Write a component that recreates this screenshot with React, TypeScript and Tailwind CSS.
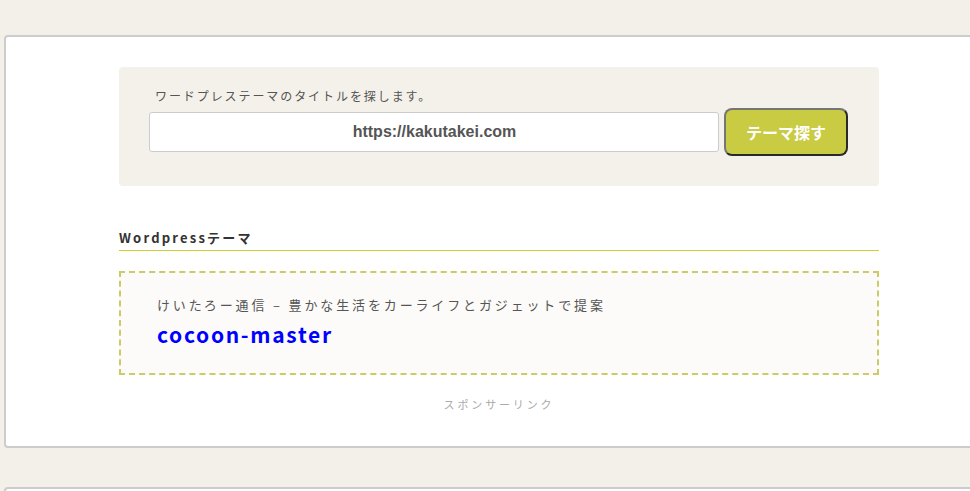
import React from "react";

export default function App() {
  const jp = {
    fontFamily: '"Noto Sans CJK JP", "Noto Sans", sans-serif',
  } as React.CSSProperties;
  return (
    <div className="w-[970px] h-[491px] overflow-hidden bg-[#f3f0e9] pt-[35px]" style={jp}>
      <div className="ml-[4px] w-[1000px] h-[413px] bg-white border-2 border-[#cccccc] rounded-[4px] pl-[113px] pt-[30px]">
        <div className="w-[760px] h-[119px] bg-[#f4f1ea] rounded-[4px] pl-[30px] pt-[21px]">
          <div className="text-[12px] leading-[16px] text-[#555] tracking-[0.16em] pl-[6px]">
            ワードプレステーマのタイトルを探します。
          </div>
          <div className="flex items-center gap-[5px] mt-[4px]">
            <div
              className="w-[570px] h-[40px] bg-white border border-[#cccccc] rounded-[3px] flex items-center justify-center text-[16px] font-bold text-[#555]"
              style={{ fontFamily: '"Liberation Sans", Arial, sans-serif' }}
            >
              <span className="pl-[1px]">https://kakutakei.com</span>
            </div>
            <div className="w-[124px] h-[48px] bg-[#c9cb42] rounded-[8px] border-2 border-t-[#767676] border-l-[#767676] border-b-[#2a2a2a] border-r-[#2a2a2a] flex items-center justify-center text-white font-bold text-[16px]">
              テーマ探す
            </div>
          </div>
        </div>
        <div className="w-[760px] mt-[43px]">
          <div className="text-[13px] leading-[18px] h-[18px] font-bold text-[#333] tracking-[0.17em]">
            Wordpressテーマ
          </div>
          <div className="h-[1px] mt-[3px] bg-[#cdd12a]"></div>
        </div>
        <div className="w-[760px] h-[104px] mt-[20px] border-2 border-dashed border-[#cccc66] bg-[#fcfbf9] pl-[36px] pt-[23px]">
          <div className="text-[13px] leading-[18px] text-[#555] tracking-[0.22em]">
            けいたろー通信 – 豊かな生活をカーライフとガジェットで提案
          </div>
          <div className="text-[21px] leading-[28px] font-bold text-[#0000ff] tracking-[0.08em] mt-[6px]">
            cocoon-master
          </div>
        </div>
        <div className="w-[760px] text-center text-[11px] text-[#aaaaaa] tracking-[0.26em] mt-[21px]">
          スポンサーリンク
        </div>
      </div>
      <div className="ml-[4px] mt-[39px] w-[1000px] h-[40px] bg-white border-2 border-[#cccccc] rounded-[4px]"></div>
    </div>
  );
}
